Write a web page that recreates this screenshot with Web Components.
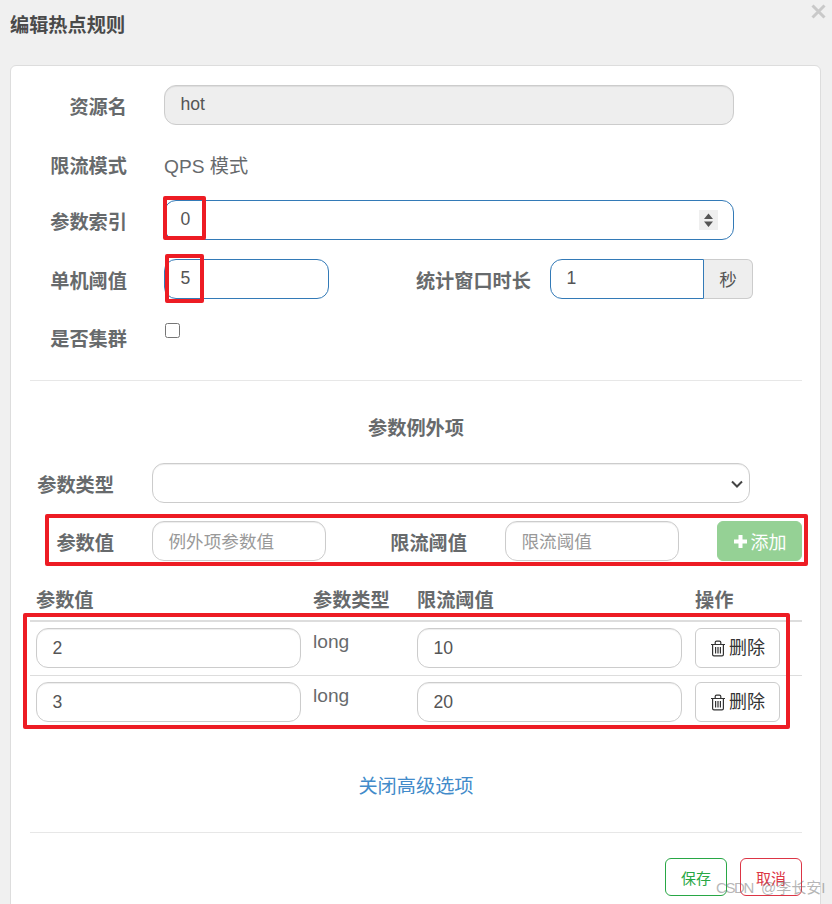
<!DOCTYPE html>
<html lang="zh">
<head>
<meta charset="utf-8">
<title>编辑热点规则</title>
<style>
html,body{margin:0;padding:0;background:#f0f0f0}
body{font-family:"Liberation Sans","Noto Sans CJK SC",sans-serif;font-size:19.2px;color:#676a6c}
</style>
</head>
<body>
<rule-dialog heading="编辑热点规则">
  <form-row style="--h:59px">
    <form-label style="--w:97px;--mr:37px">资源名</form-label>
    <ui-field disabled style="--w:570px">hot</ui-field>
  </form-row>
  <form-row style="--h:56px">
    <form-label style="--w:97px;--mr:37px">限流模式</form-label>
    <plain-text>QPS 模式</plain-text>
  </form-row>
  <form-row style="--h:59px">
    <form-label style="--w:97px;--mr:37px">参数索引</form-label>
    <ui-field focus style="--w:570px">0<spin-arrows slot="end"></spin-arrows></ui-field>
  </form-row>
  <form-row style="--h:58px">
    <form-label style="--w:97px;--mr:37px">单机阈值</form-label>
    <ui-field focus style="--w:165px">5</ui-field>
    <form-label style="--w:202px;--mr:19px">统计窗口时长</form-label>
    <ui-field focus square-end style="--w:154px">1</ui-field>
    <unit-addon>秒</unit-addon>
  </form-row>
  <form-row style="--h:63px">
    <form-label style="--w:97px;--mr:37px">是否集群</form-label>
    <ui-check></ui-check>
  </form-row>
  <ui-rule></ui-rule>
  <section-title>参数例外项</section-title>
  <form-row style="--h:58px">
    <form-label style="--w:84px;--mr:38px">参数类型</form-label>
    <ui-field style="--w:598px"><chevron-down slot="end"></chevron-down></ui-field>
  </form-row>
  <form-row style="--h:58px">
    <form-label style="--w:84px;--mr:38px">参数值</form-label>
    <ui-field placeholder style="--w:174px">例外项参数值</ui-field>
    <form-label style="--w:141px;--mr:38px">限流阈值</form-label>
    <ui-field placeholder style="--w:174px">限流阈值</ui-field>
    <ui-button kind="add" style="--w:85px;--ml:38px"><plus-icon></plus-icon>添加</ui-button>
  </form-row>
  <rule-table>
    <table-row head>
      <span>参数值</span><span>参数类型</span><span>限流阈值</span><span>操作</span>
    </table-row>
    <table-row line>
      <ui-field style="--w:265px">2</ui-field>
      <span>long</span>
      <ui-field style="--w:265px">10</ui-field>
      <ui-button style="--w:85px"><trash-icon></trash-icon>删除</ui-button>
    </table-row>
    <table-row>
      <ui-field style="--w:265px">3</ui-field>
      <span>long</span>
      <ui-field style="--w:265px">20</ui-field>
      <ui-button style="--w:85px"><trash-icon></trash-icon>删除</ui-button>
    </table-row>
  </rule-table>
  <link-line>关闭高级选项</link-line>
  <ui-rule></ui-rule>
  <dialog-actions>
    <ui-button kind="save" style="--w:62px;--bh:38px">保存</ui-button>
    <ui-button kind="cancel" style="--w:62px;--bh:38px">取消</ui-button>
  </dialog-actions>

  <red-mark slot="over" style="--x:163px;--y:196px;--bw:43px;--bh:44px"></red-mark>
  <red-mark slot="over" style="--x:165px;--y:254px;--bw:39px;--bh:49px"></red-mark>
  <red-mark slot="over" style="--x:45px;--y:514px;--bw:763px;--bh:52px"></red-mark>
  <red-mark slot="over" style="--x:23px;--y:613px;--bw:767px;--bh:116px"></red-mark>
  <water-mark slot="over"><span style="letter-spacing:-1.4px;margin-right:4px">CSDN</span> @李长安I</water-mark>
</rule-dialog>

<script>
function define(name, css, html) {
  customElements.define(name, class extends HTMLElement {
    constructor() {
      super();
      const root = this.attachShadow({ mode: 'open' });
      root.innerHTML = '<style>' + css + '</style>' + (html || '<slot></slot>');
    }
  });
}

customElements.define('rule-dialog', class extends HTMLElement {
  constructor() {
    super();
    const root = this.attachShadow({ mode: 'open' });
    root.innerHTML = `<style>
      :host{display:block;position:relative;width:832px;height:904px;overflow:hidden;background:#f0f0f0}
      header{display:flex;justify-content:space-between;align-items:flex-start;height:65px;box-sizing:border-box;padding:0 6px 0 10px}
      h1{margin:15px 0 0;font-size:19.2px;line-height:22px;font-weight:bold;color:#4a4a4a}
      svg{display:block;margin-top:4px}
      main{box-sizing:border-box;width:811px;height:900px;margin-left:10px;padding:19px 18px 0 19px;background:#fff;border:1px solid #ddd;border-radius:6px}
    </style>
    <header><h1></h1>
      <svg width="15" height="15" viewBox="0 0 15 15" fill="none" stroke="#c9c9c9" stroke-width="3"><path d="M1.5 1.5l12 12M13.5 1.5l-12 12"/></svg>
    </header>
    <main><slot></slot></main>
    <slot name="over"></slot>`;
    root.querySelector('h1').textContent = this.getAttribute('heading');
  }
});

define('form-row', `:host{display:flex;align-items:flex-start;height:var(--h);width:772px}`);
define('form-label', `:host{display:block;box-sizing:border-box;flex:none;width:var(--w);margin-right:var(--mr);text-align:right;font-weight:bold;font-size:19.2px;line-height:46px;color:#676a6c;white-space:nowrap}`);
define('plain-text', `:host{display:block;font-size:19.2px;line-height:46px;color:#676a6c;white-space:nowrap}`);

define('ui-field', `
  :host{display:flex;align-items:center;box-sizing:border-box;flex:none;width:var(--w);height:40px;padding:0 15px 1px 15.5px;background:#fff;border:1px solid #ccc;border-radius:12px;box-shadow:inset 0 1px 1px rgba(0,0,0,.075);font-size:17.6px;color:#555;white-space:nowrap}
  :host([disabled]){background:#eee}
  :host([focus]){border-color:#337ab7;box-shadow:none}
  :host([placeholder]){color:#999;padding-bottom:2px}
  :host([square-end]){border-radius:12px 0 0 12px}
  .end{margin-left:auto;display:flex;align-items:center}
`, `<slot></slot><span class="end"><slot name="end"></slot></span>`);

define('unit-addon', `:host{display:flex;align-items:center;justify-content:center;box-sizing:border-box;flex:none;width:49px;height:40px;padding-bottom:2px;background:#eee;border:1px solid #ccc;border-left:0;border-radius:0 6px 6px 0;font-size:17.6px;color:#555}`);

define('spin-arrows', `:host{display:block;width:19px;height:20px;margin:1px 0 0;background:#efefef}svg{display:block}`,
  `<svg width="19" height="20" viewBox="0 0 19 20" fill="#555"><path d="M9.5 3.5L14 9H5zM9.5 17L5 11.5h9z"/></svg>`);
define('chevron-down', `:host{display:block;margin:3px -9px 0 0}svg{display:block}`,
  `<svg width="12" height="8" viewBox="0 0 12 8" fill="none" stroke="#444" stroke-width="2"><path d="M1 1.5l5 5 5-5"/></svg>`);
define('ui-check', `:host{display:block}input{display:block;width:15px;height:15px;margin:6px 0 0 0.5px}`, `<input type="checkbox" aria-label="是否集群">`);
define('ui-rule', `:host{display:block;height:1px;background:#e7e7e7;width:772px}`);
define('section-title', `:host{display:block;height:82px;line-height:96px;text-align:center;font-weight:bold;font-size:19.2px;color:#676a6c}`);

define('ui-button', `
  :host{display:flex;align-items:center;justify-content:center;gap:3px;box-sizing:border-box;flex:none;width:var(--w);height:var(--bh,40px);margin-left:var(--ml,0);background:#fff;border:1px solid #ccc;border-radius:6px;font-size:18px;color:#333;white-space:nowrap}
  :host([kind=add]){background:#95d195;border-color:#95d195;color:#fff;gap:3px}
  :host([kind=save]){border-color:#28a745;color:#28a745;font-size:15px}
  :host([kind=cancel]){border-color:#dc3545;color:#dc3545;font-size:15px}
`);
define('plus-icon', `:host{display:block}svg{display:block}`,
  `<svg width="15" height="15" viewBox="0 0 15 15" fill="#fff"><path d="M5.5 1h4v4.5H14v4H9.5V14h-4V9.5H1v-4h4.5z"/></svg>`);
define('trash-icon', `:host{display:block}svg{display:block}`,
  `<svg width="16" height="17" viewBox="0 0 16 17" fill="none" stroke="#333" stroke-width="1.2"><path d="M1 4.5h14M5.2 4.3V2.6c0-.9.5-1.5 1.4-1.5h2.8c.9 0 1.4.6 1.4 1.5v1.7M2.6 4.5v10c0 .9.5 1.4 1.4 1.4h8c.9 0 1.4-.5 1.4-1.4v-10M5.6 7v6.5M8 7v6.5M10.4 7v6.5"/></svg>`);

define('rule-table', `:host{display:block;width:772px}`);
define('table-row', `
  :host{display:grid;grid-template-columns:277px 104px 278px 113px;box-sizing:border-box;height:53px;padding:6px 0 0 6px;font-size:19.2px;line-height:28px;color:#676a6c;grid-auto-rows:min-content}
  :host([line]){height:54px;border-bottom:1px solid #ddd}
  :host([head]){height:43px;padding:1px 0 0 6px;align-items:center;grid-auto-rows:41px;font-weight:bold;border-bottom:2px solid #ddd}
`);

define('link-line', `:host{display:block;height:103px;box-sizing:border-box;padding-top:38px;line-height:40px;text-align:center;font-size:19.2px;color:#428bca}`);
define('dialog-actions', `:host{display:flex;justify-content:flex-end;gap:13px;padding-top:25px;width:772px}`);

define('red-mark', `:host{position:absolute;left:var(--x);top:var(--y);width:var(--bw);height:var(--bh);box-sizing:border-box;border:4px solid #ed1c24;border-radius:2px;pointer-events:none}`);
define('water-mark', `:host{position:absolute;left:716px;top:879px;font-size:15px;line-height:18px;color:rgba(110,110,110,.5);white-space:nowrap}`);
</script>
</body>
</html>
